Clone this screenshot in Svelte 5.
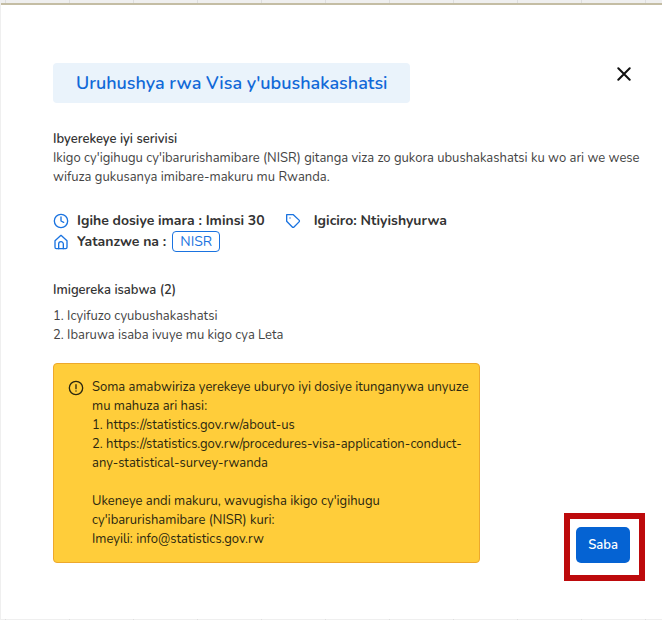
<script lang="ts">
	const service = {
		title: "Uruhushya rwa Visa y'ubushakashatsi",
		duration: 'Iminsi 30',
		price: 'Ntiyishyurwa',
		provider: 'NISR'
	};

	const attachments = ['Icyifuzo cyubushakashatsi', 'Ibaruwa isaba ivuye mu kigo cya Leta'];

	let open = $state(true);
</script>

{#if open}
	<div class="modal" role="dialog" aria-labelledby="title">
		<header>
			<h1 id="title">{service.title}</h1>
			<button class="close" aria-label="Funga" onclick={() => (open = false)}>
				<svg width="14" height="14" viewBox="0 0 14 14" fill="none" aria-hidden="true">
					<path d="M1.3 1.3l11.4 11.4M12.7 1.3L1.3 12.7" stroke="currentColor" stroke-width="2" stroke-linecap="round" />
				</svg>
			</button>
		</header>

		<section class="about">
			<h2>Ibyerekeye iyi serivisi</h2>
			<p>
				Ikigo cy'igihugu cy'ibarurishamibare (NISR) gitanga viza zo gukora ubushakashatsi ku wo ari we wese<br />
				wifuza gukusanya imibare-makuru mu Rwanda.
			</p>
		</section>

		<div class="meta">
			<div class="meta-item">
				<svg width="16" height="16" viewBox="0 0 24 24" fill="none" aria-hidden="true">
					<circle cx="12" cy="12" r="10" />
					<path d="M12 6v6l4 2" />
				</svg>
				<span>Igihe dosiye imara : {service.duration}</span>
			</div>
			<div class="meta-item price">
				<svg width="16" height="16" viewBox="0 0 24 24" fill="none" aria-hidden="true">
					<path d="M2.5 2.5h10l8.6 8.2a1.8 1.8 0 0 1 0 2.6l-7.6 7.8a1.8 1.8 0 0 1-2.6 0L2.5 12.5z" />
					<path d="M7.5 7.5h.01" />
				</svg>
				<span>Igiciro: {service.price}</span>
			</div>
			<div class="meta-item">
				<svg width="16" height="16" viewBox="0 0 24 24" fill="none" aria-hidden="true">
					<path d="M3 10l9-8 9 8v10a2 2 0 0 1-2 2H5a2 2 0 0 1-2-2z" />
					<path d="M8.5 22v-7a3.5 3.5 0 0 1 7 0v7" />
				</svg>
				<span>Yatanzwe na :</span>
				<span class="tag">{service.provider}</span>
			</div>
		</div>

		<section class="attachments">
			<h2>Imigereka isabwa ({attachments.length})</h2>
			<ol>
				{#each attachments as name, i}
					<li>{i + 1}. {name}</li>
				{/each}
			</ol>
		</section>

		<div class="bottom">
			<div class="notice">
				<svg width="16" height="16" viewBox="0 0 24 24" fill="none" aria-hidden="true">
					<circle cx="12" cy="12" r="10" />
					<path d="M12 7v6M12 16.5h.01" />
				</svg>
				<div>
					<p>
						Soma amabwiriza yerekeye uburyo iyi dosiye itunganywa unyuze<br />
						mu mahuza ari hasi:<br />
						1. https://statistics.gov.rw/about-us<br />
						2. https://statistics.gov.rw/procedures-visa-application-conduct-<br />
						any-statistical-survey-rwanda
					</p>
					<p>
						Ukeneye andi makuru, wavugisha ikigo cy'igihugu<br />
						cy'ibarurishamibare (NISR) kuri:<br />
						Imeyili: info@statistics.gov.rw
					</p>
				</div>
			</div>
			<div class="action">
				<button class="apply">Saba</button>
			</div>
		</div>
	</div>
{/if}

<style>
	:global(body) {
		background: repeating-linear-gradient(90deg, transparent 0 5px, #dedede 5px 6px, transparent 6px 64px) #efefef;
		font-family: Nunito, 'Noto Sans', sans-serif;
		font-size: 13px;
		line-height: 19px;
		color: #444;
	}

	.modal {
		margin: 3px 0 1px 1px;
		padding: 58px 15px 56px 52px;
		border-top: 2px solid #c4bda4;
		background: #fff;
	}

	h1,
	h2,
	p,
	ol {
		margin: 0;
		padding: 0;
	}

	header {
		display: flex;
		justify-content: space-between;
		align-items: flex-start;
		margin-bottom: 27px;
		padding-right: 16px;
	}

	h1 {
		padding: 8px 23px;
		border-radius: 4px;
		background: #eaf3fb;
		color: #1169d8;
		font-size: 18px;
		line-height: 24px;
		font-weight: 600;
	}

	h2 {
		font-size: 13px;
		font-weight: 600;
		color: #333;
	}

	.close {
		display: flex;
		padding: 4px 0;
		border: 0;
		background: none;
		color: #111;
		cursor: pointer;
	}

	.about {
		margin-bottom: 23px;
	}

	/* ── Duration, price and provider ── */
	.meta {
		display: grid;
		grid-template-columns: auto 1fr;
		column-gap: 20px;
		margin-bottom: 29px;
		font-size: 14px;
		line-height: 21px;
		font-weight: 700;
		color: #333;
	}

	.meta-item {
		display: flex;
		align-items: center;
		gap: 8px;
	}

	.meta-item.price {
		gap: 13px;
	}

	svg {
		flex-shrink: 0;
		stroke: currentColor;
		stroke-width: 2;
		stroke-linecap: round;
		stroke-linejoin: round;
	}

	.meta-item svg {
		color: #1a73e0;
	}

	.tag {
		margin-left: -2px;
		padding: 0 7px;
		border: 1px solid #1a73e0;
		border-radius: 4px;
		line-height: 19px;
		font-weight: 400;
		color: #1a73e0;
	}

	.attachments h2 {
		margin-bottom: 7px;
	}

	.attachments ol {
		list-style: none;
	}

	/* ── Notice and action ── */
	.bottom {
		display: flex;
		align-items: flex-end;
		gap: 96px;
		margin-top: 18px;
		padding-right: 17px;
	}

	.notice {
		flex: 1;
		display: flex;
		gap: 8px;
		padding: 14px 8px 13px 14px;
		border: 1px solid #eda82c;
		border-radius: 4px;
		background: #ffcd3a;
		color: #2b2710;
	}

	.notice svg {
		margin-top: 2px;
	}

	.notice p + p {
		margin-top: 19px;
	}

	/* frame drawn round the button */
	.action {
		position: relative;
	}

	.action::after {
		content: '';
		position: absolute;
		inset: -14px -15px -18px -12px;
		border: 6px solid #bd0a0c;
		pointer-events: none;
	}

	.apply {
		display: block;
		padding: 8px 12px;
		border: 0;
		border-radius: 5px;
		background: #0563d3;
		color: #fff;
		font: inherit;
		font-weight: 600;
		line-height: 20px;
		cursor: pointer;
	}
</style>
